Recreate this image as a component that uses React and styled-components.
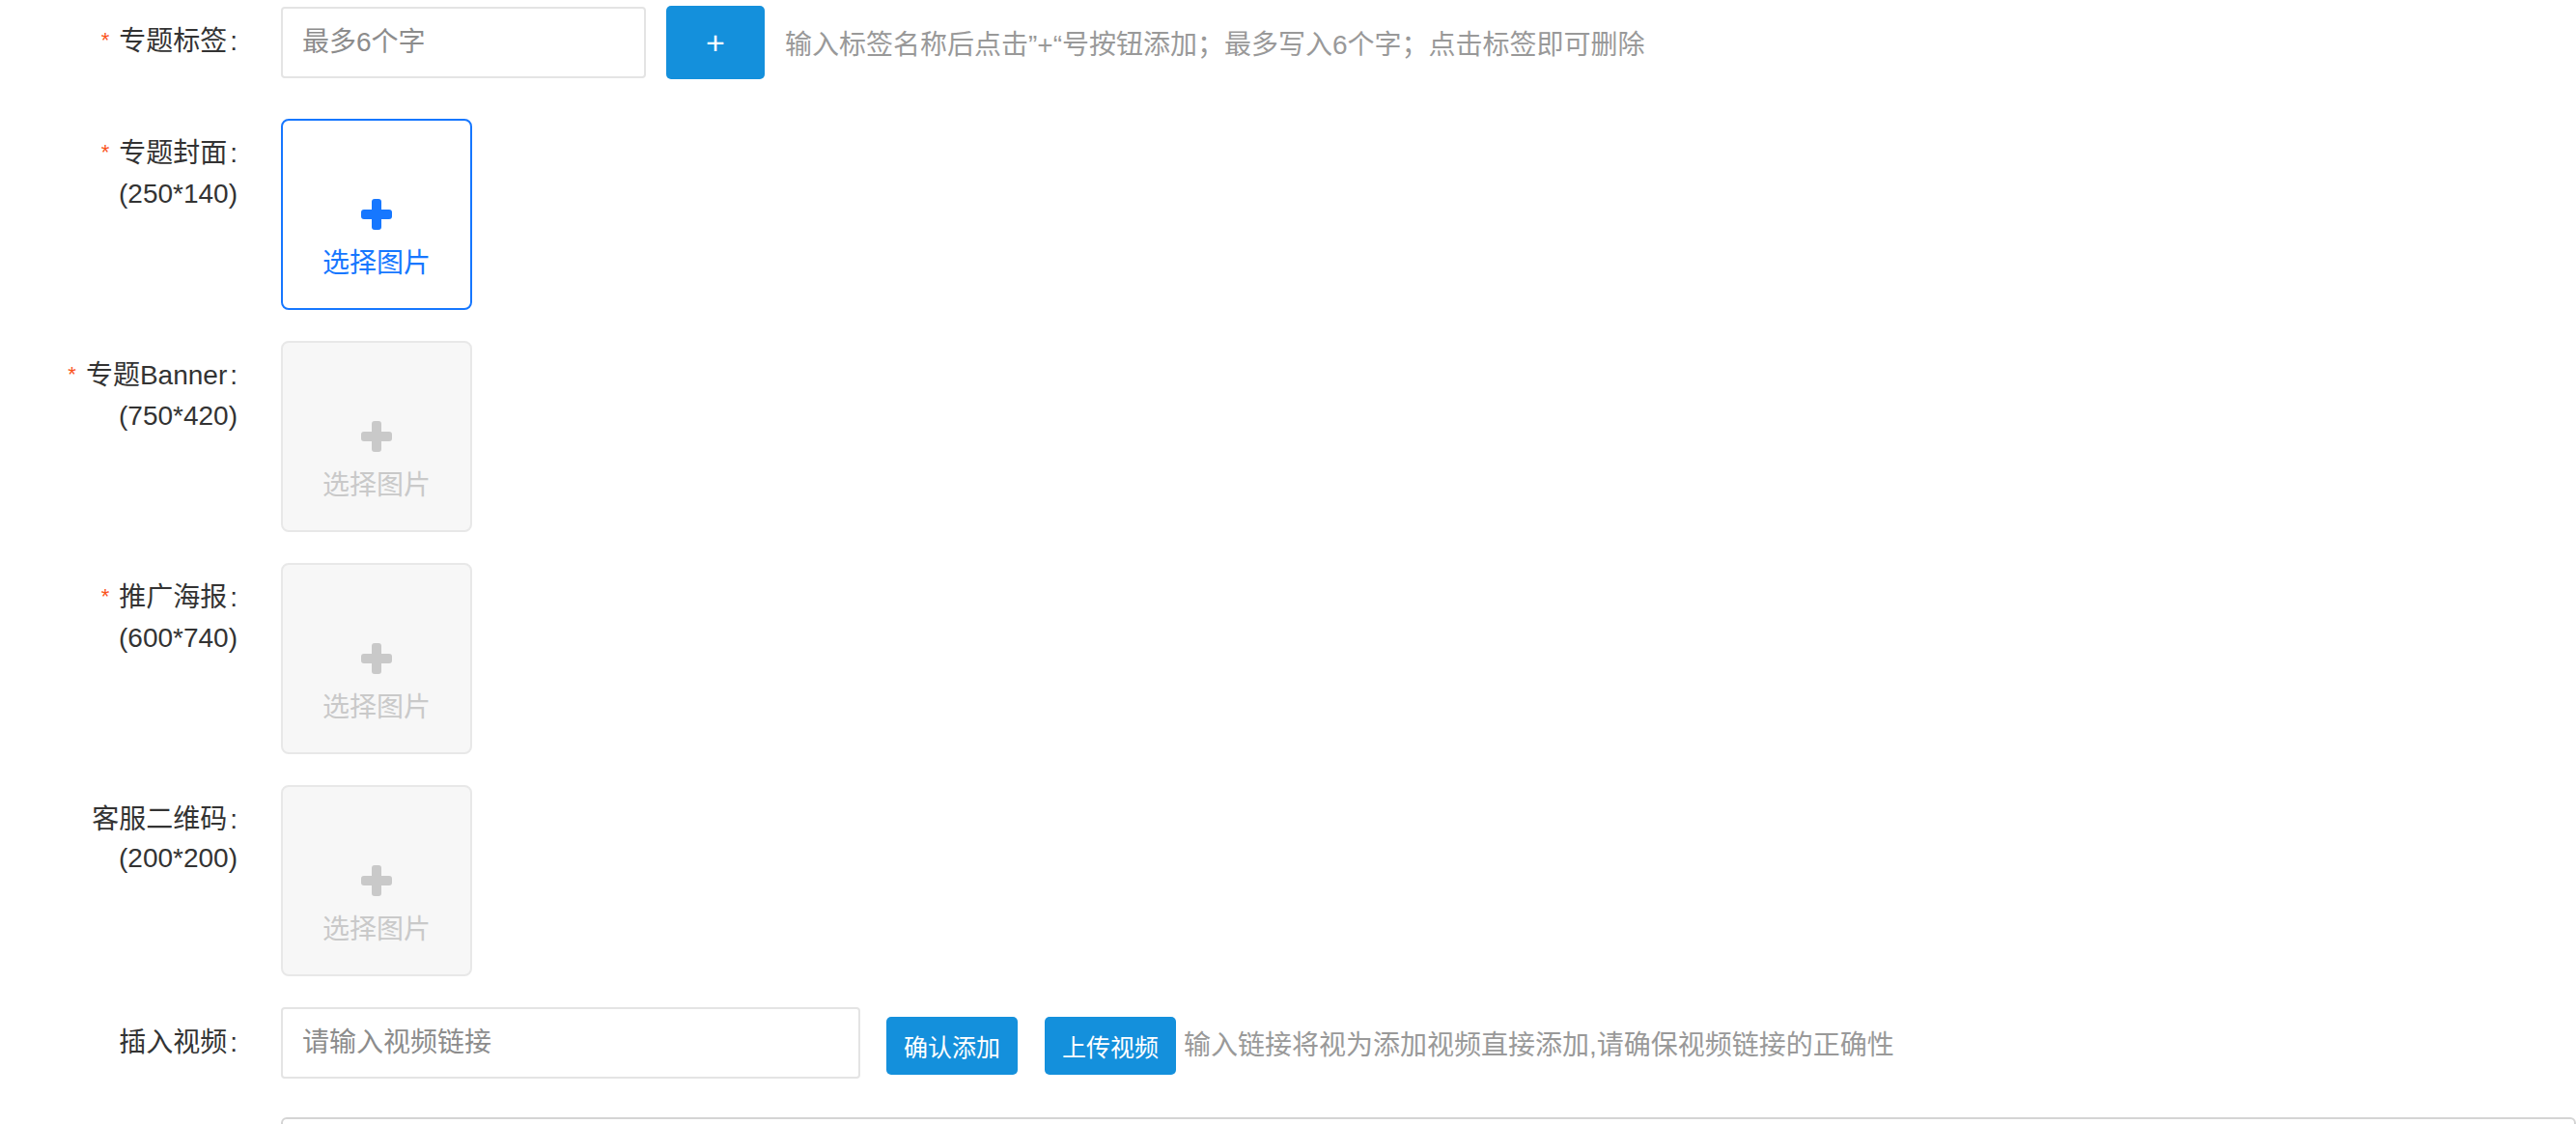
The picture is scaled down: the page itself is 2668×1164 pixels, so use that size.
import React from 'react';
import styled, { createGlobalStyle } from 'styled-components';

const GlobalStyle = createGlobalStyle`
  html, body {
    margin: 0;
    padding: 0;
    background: #ffffff;
    overflow: hidden;
  }
  body {
    font-family: "Liberation Sans", "Noto Sans CJK SC", sans-serif;
    color: #333333;
  }
`;

const Form = styled.div`
  padding-top: 6px;
`;

const Row = styled.div`
  display: flex;
  align-items: ${p => (p.top ? 'flex-start' : 'center')};
  min-height: ${p => p.height || 0}px;
  margin-bottom: ${p => p.gap}px;
`;

const Label = styled.div`
  width: 246px;
  margin-right: 45px;
  flex-shrink: 0;
  text-align: right;
  font-size: 28px;
  line-height: 40px;
  color: #333333;
  padding-top: ${p => (p.multi ? 16 : 0)}px;
  align-self: ${p => (p.multi ? 'flex-start' : 'center')};
`;

const Colon = styled.span`
  margin-left: 3px;
`;

const Star = styled.span`
  color: #fa541c;
  font-size: 22px;
  margin-right: 10px;
  position: relative;
  top: -3px;
`;

const TextInput = styled.input`
  box-sizing: border-box;
  width: ${p => p.width}px;
  height: 74px;
  border: 2px solid #e4e4e4;
  border-radius: 4px;
  padding: 0 20px;
  font-family: "Liberation Sans", "Noto Sans CJK SC", sans-serif;
  font-size: 28px;
  color: #333333;
  outline: none;
  &::placeholder {
    color: #8c8c8c;
  }
`;

const BlueButton = styled.button`
  box-sizing: border-box;
  width: ${p => p.width}px;
  height: ${p => p.height}px;
  margin-left: ${p => p.offset}px;
  margin-top: ${p => p.top || 0}px;
  border: none;
  border-radius: 5px;
  background: #1490dc;
  color: #ffffff;
  font-family: "Liberation Sans", "Noto Sans CJK SC", sans-serif;
  font-size: ${p => p.size || 25}px;
  padding: 0;
  cursor: pointer;
  flex-shrink: 0;
`;

const Hint = styled.span`
  margin-left: ${p => p.offset}px;
  font-size: 28px;
  color: #999999;
  white-space: nowrap;
  align-self: center;
`;

const UploadBox = styled.div`
  box-sizing: border-box;
  width: 198px;
  height: 198px;
  border: 2px solid ${p => (p.active ? '#1677ff' : '#e8e8e8')};
  border-radius: 8px;
  background: ${p => (p.active ? '#ffffff' : '#f7f7f7')};
  color: ${p => (p.active ? '#1677ff' : '#c9c9c9')};
  display: flex;
  flex-direction: column;
  align-items: center;
  padding-top: 81px;
  cursor: pointer;
`;

const UploadText = styled.div`
  margin-top: 16px;
  font-size: 28px;
  line-height: 38px;
`;

const Editor = styled.div`
  box-sizing: border-box;
  width: 2400px;
  height: 300px;
  border: 2px solid #d4d4d4;
  border-radius: 6px;
  background: #ffffff;
`;

const PlusIcon = () => (
  <svg width="32" height="32" viewBox="0 0 32 32" fill="currentColor">
    <rect x="11" y="0" width="10" height="32" rx="3" />
    <rect x="0" y="11" width="32" height="10" rx="3" />
  </svg>
);

const uploads = [
  { name: '专题封面', size: '250*140', required: true, active: true },
  { name: '专题Banner', size: '750*420', required: true },
  { name: '推广海报', size: '600*740', required: true },
  { name: '客服二维码', size: '200*200', required: false },
];

export default function App() {
  return (
    <Form>
      <GlobalStyle />
      <Row height={76} gap={41}>
        <Label>
          <Star>*</Star>专题标签<Colon>:</Colon>
        </Label>
        <TextInput width={378} placeholder="最多6个字" />
        <BlueButton width={102} height={76} offset={21} size={34}>
          +
        </BlueButton>
        <Hint offset={21}>输入标签名称后点击”+“号按钮添加；最多写入6个字；点击标签即可删除</Hint>
      </Row>

      {uploads.map(item => (
        <Row key={item.name} top gap={32}>
          <Label multi>
            {item.required && <Star>*</Star>}
            {item.name}
            <Colon>:</Colon>
            <br />({item.size})
          </Label>
          <UploadBox active={item.active}>
            <PlusIcon />
            <UploadText>选择图片</UploadText>
          </UploadBox>
        </Row>
      ))}

      <Row top gap={40}>
        <Label>
          插入视频<Colon>:</Colon>
        </Label>
        <TextInput width={600} placeholder="请输入视频链接" />
        <BlueButton width={136} height={60} offset={27} top={10}>
          确认添加
        </BlueButton>
        <BlueButton width={136} height={60} offset={28} top={10}>
          上传视频
        </BlueButton>
        <Hint offset={8}>输入链接将视为添加视频直接添加,请确保视频链接的正确性</Hint>
      </Row>

      <Row>
        <Label />
        <Editor />
      </Row>
    </Form>
  );
}
